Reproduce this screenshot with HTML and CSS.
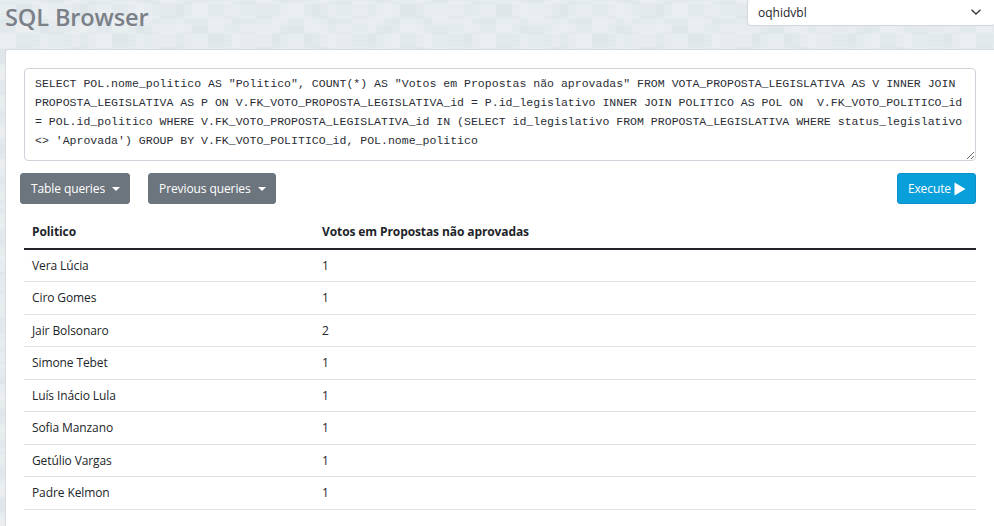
FILE: index.html
```html
<!DOCTYPE html>
<html lang="pt">
<head>
<meta charset="utf-8">
<title>SQL Browser</title>
<link rel="stylesheet" href="styles.css">
</head>
<body>
<header class="topbar">
  <h1 class="title">SQL Browser</h1>
  <div class="db-select">
    <span class="db-name">oqhidvbl</span>
    <svg class="chevron" width="12" height="8" viewBox="0 0 12 8"><path d="M1.5 1.8 L6 6 L10.5 1.8" fill="none" stroke="#343a40" stroke-width="1.4"/></svg>
  </div>
</header>
<main class="card">
  <textarea class="query" spellcheck="false">SELECT POL.nome_politico AS "Politico", COUNT(*) AS "Votos em Propostas não aprovadas" FROM VOTA_PROPOSTA_LEGISLATIVA AS V INNER JOIN PROPOSTA_LEGISLATIVA AS P ON V.FK_VOTO_PROPOSTA_LEGISLATIVA_id = P.id_legislativo INNER JOIN POLITICO AS POL ON  V.FK_VOTO_POLITICO_id = POL.id_politico WHERE V.FK_VOTO_PROPOSTA_LEGISLATIVA_id IN (SELECT id_legislativo FROM PROPOSTA_LEGISLATIVA WHERE status_legislativo <> 'Aprovada') GROUP BY V.FK_VOTO_POLITICO_id, POL.nome_politico</textarea>
  <div class="toolbar">
    <div class="left-tools">
      <button class="btn btn-gray">Table queries<span class="caret"></span></button>
      <button class="btn btn-gray">Previous queries<span class="caret"></span></button>
    </div>
    <button class="btn btn-blue">Execute<svg class="play" width="12" height="14" viewBox="0 0 12 14"><path d="M0.5 0.5 L11.5 7 L0.5 13.5 Z" fill="#fff"/></svg></button>
  </div>
  <table class="results">
    <colgroup><col class="col-a"><col></colgroup>
    <thead>
      <tr><th>Politico</th><th>Votos em Propostas não aprovadas</th></tr>
    </thead>
    <tbody>
      <tr><td>Vera Lúcia</td><td>1</td></tr>
      <tr><td>Ciro Gomes</td><td>1</td></tr>
      <tr><td>Jair Bolsonaro</td><td>2</td></tr>
      <tr><td>Simone Tebet</td><td>1</td></tr>
      <tr><td>Luís Inácio Lula</td><td>1</td></tr>
      <tr><td>Sofia Manzano</td><td>1</td></tr>
      <tr><td>Getúlio Vargas</td><td>1</td></tr>
      <tr><td>Padre Kelmon</td><td>1</td></tr>
    </tbody>
  </table>
</main>
</body>
</html>
```

FILE: styles.css
```css
html {
  overflow: hidden;
}
body {
  margin: 0;
  height: 526px;
  font-family: "Open Sans", "Noto Sans", sans-serif;
  color: #212529;
  background-color: #e6ecef;
  background-image:
    conic-gradient(rgba(120,140,150,0.035) 25%, transparent 0 50%, rgba(120,140,150,0.035) 0 75%, transparent 0),
    conic-gradient(rgba(255,255,255,0.18) 25%, transparent 0 50%, rgba(255,255,255,0.18) 0 75%, transparent 0),
    conic-gradient(rgba(120,140,150,0.03) 25%, transparent 0 50%, rgba(120,140,150,0.03) 0 75%, transparent 0);
  background-size: 32px 32px, 48px 30px, 80px 45px;
  background-position: 0 0, 16px 4px, 32px 2px;
}
.topbar {
  height: 49px;
  display: flex;
  justify-content: space-between;
  align-items: flex-start;
}
.title {
  margin: 0;
  padding-left: 5px;
  font-size: 23.6px;
  font-weight: 600;
  line-height: 34px;
  color: #7b8088;
  letter-spacing: -0.15px;
}
.db-select {
  box-sizing: border-box;
  width: 249px;
  height: 28px;
  margin-top: -2px;
  margin-right: -2px;
  background: #fff;
  border: 1px solid #d3d8dd;
  border-radius: 4px;
  display: flex;
  align-items: center;
  justify-content: space-between;
  padding: 0 13px 0 10px;
  font-size: 12px;
}
.db-name {
  color: #212529;
}
.chevron {
  display: block;
}
.card {
  box-sizing: border-box;
  display: block;
  margin-left: 5px;
  margin-right: -2px;
  height: 477px;
  background: #fff;
  border-top: 1px solid #d5dbe1;
  border-left: 1px solid #d5dbe1;
  border-top-left-radius: 3px;
  padding: 18px 18px 0 18px;
}
.query {
  display: block;
  box-sizing: border-box;
  width: 952px;
  height: 93px;
  margin: 0;
  padding: 5px 5px 5px 10px;
  border: 1px solid #ced4da;
  border-radius: 4px;
  font-family: "Liberation Mono", "DejaVu Sans Mono", monospace;
  font-size: 11.54px;
  line-height: 19px;
  color: #2a2d34;
  background: #fff;
  resize: vertical;
  overflow: hidden;
  outline: none;
}
.toolbar {
  margin-top: 12px;
  margin-left: -4px;
  width: 956px;
  display: flex;
  justify-content: space-between;
  align-items: center;
}
.left-tools {
  display: flex;
  gap: 18px;
}
.btn {
  box-sizing: border-box;
  height: 31px;
  display: inline-flex;
  align-items: center;
  font-family: inherit;
  font-size: 12px;
  letter-spacing: -0.1px;
  color: #fff;
  border-radius: 3px;
  padding: 0 9px 0 10px;
  cursor: pointer;
}
.btn-gray {
  background: #6c757d;
  border: 1px solid #6c757d;
}
.btn-blue {
  background: #089fda;
  border: 1px solid #0792c9;
  padding: 0 9px 0 10px;
}
.caret {
  display: inline-block;
  margin-left: 7px;
  width: 0;
  height: 0;
  border-top: 4px solid #fff;
  border-left: 4px solid transparent;
  border-right: 4px solid transparent;
}
.play {
  display: block;
  margin-left: 3px;
}
.results {
  margin-top: 12px;
  width: 952px;
  border-collapse: collapse;
  table-layout: fixed;
  font-size: 12px;
  letter-spacing: -0.1px;
  line-height: 19.5px;
}
.col-a {
  width: 290px;
}
.results th {
  text-align: left;
  font-weight: 700;
  padding: 6px 8px;
  border-bottom: 2px solid #212529;
}
.results td {
  padding: 6px 8px;
  border-bottom: 1px solid #dee2e6;
}
```
